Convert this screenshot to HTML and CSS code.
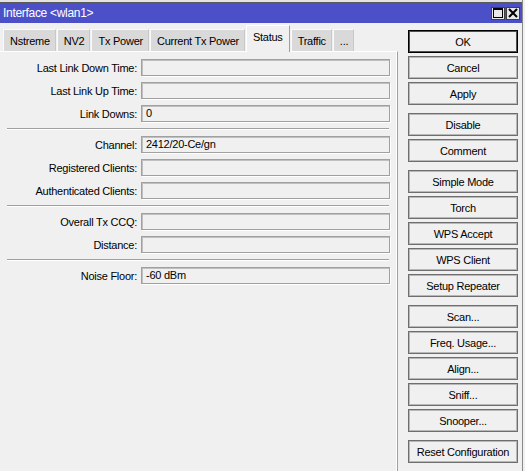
FILE: index.html
```html
<!DOCTYPE html>
<html>
<head>
<meta charset="utf-8">
<link rel="stylesheet" href="styles.css">
</head>
<body>
<div class="window">
  <div class="topstrip"></div>
  <div class="titlebar">
    <span class="title">Interface &lt;wlan1&gt;</span>
    <div class="winbtns">
      <span class="winbtn"><svg width="10" height="10" viewBox="0 0 10 10"><rect x="0.5" y="0.5" width="9" height="9" fill="none" stroke="#000" stroke-width="1"/><rect x="0" y="0" width="10" height="2" fill="#000"/></svg></span>
      <span class="winbtn"><svg width="10" height="10" viewBox="0 0 10 10"><path d="M1 1 L9 9 M9 1 L1 9" stroke="#000" stroke-width="2"/></svg></span>
    </div>
  </div>
  <div class="main">
    <div class="left">
      <div class="tabs">
        <span class="tab">Nstreme</span>
        <span class="tab">NV2</span>
        <span class="tab">Tx Power</span>
        <span class="tab">Current Tx Power</span>
        <span class="tab active">Status</span>
        <span class="tab">Traffic</span>
        <span class="tab">...</span>
      </div>
      <div class="panel">
        <div class="row"><span class="label">Last Link Down Time:</span><span class="field"></span></div>
        <div class="row"><span class="label">Last Link Up Time:</span><span class="field"></span></div>
        <div class="row"><span class="label">Link Downs:</span><span class="field">0</span></div>
        <div class="sep"></div>
        <div class="row"><span class="label">Channel:</span><span class="field">2412/20-Ce/gn</span></div>
        <div class="row"><span class="label">Registered Clients:</span><span class="field"></span></div>
        <div class="row"><span class="label">Authenticated Clients:</span><span class="field"></span></div>
        <div class="sep"></div>
        <div class="row"><span class="label">Overall Tx CCQ:</span><span class="field"></span></div>
        <div class="row"><span class="label">Distance:</span><span class="field"></span></div>
        <div class="sep"></div>
        <div class="row"><span class="label">Noise Floor:</span><span class="field">-60 dBm</span></div>
      </div>
    </div>
    <div class="right">
      <div class="group">
        <button class="btn default">OK</button>
        <button class="btn">Cancel</button>
        <button class="btn">Apply</button>
      </div>
      <div class="group">
        <button class="btn">Disable</button>
        <button class="btn">Comment</button>
      </div>
      <div class="group">
        <button class="btn">Simple Mode</button>
        <button class="btn">Torch</button>
        <button class="btn">WPS Accept</button>
        <button class="btn">WPS Client</button>
        <button class="btn">Setup Repeater</button>
      </div>
      <div class="group">
        <button class="btn">Scan...</button>
        <button class="btn">Freq. Usage...</button>
        <button class="btn">Align...</button>
        <button class="btn">Sniff...</button>
        <button class="btn">Snooper...</button>
      </div>
      <div class="group">
        <button class="btn">Reset Configuration</button>
      </div>
    </div>
  </div>
</div>
</body>
</html>
```
FILE: styles.css
```css
html, body {
  margin: 0;
  padding: 0;
  background: #f0f0f0;
}
body {
  font-family: "Liberation Sans", Arial, sans-serif;
  font-size: 11px;
  letter-spacing: -0.25px;
  color: #000;
}
.window {
  width: 522px;
  height: 471px;
  display: flex;
  flex-direction: column;
  overflow: hidden;
  border-right: 1px solid #8a8a8a;
}
.topstrip {
  height: 2px;
  border-bottom: 1px solid #5a5a5a;
  background: #e4e4e4;
}
.titlebar {
  height: 20px;
  background: #4c50c8;
  color: #fff;
  display: flex;
  align-items: center;
  justify-content: space-between;
  padding: 0 2px 0 3px;
}
.title {
  font-size: 12px;
  letter-spacing: -0.3px;
}
.winbtns {
  display: flex;
  gap: 1px;
}
.winbtn {
  width: 14px;
  height: 13px;
  background: #e8e8e8;
  border: 1px solid #404040;
  box-sizing: border-box;
  display: flex;
  align-items: center;
  justify-content: center;
}
.main {
  flex: 1;
  display: flex;
}
.left {
  width: 398px;
  display: flex;
  flex-direction: column;
}
.tabs {
  height: 28px;
  display: flex;
  align-items: flex-end;
  padding-left: 3px;
  gap: 1px;
}
.tab {
  height: 22px;
  box-sizing: border-box;
  background: #d9d9d9;
  border-top: 1px solid #fafafa;
  border-left: 1px solid #fafafa;
  border-right: 1px solid #c8c8c8;
  display: flex;
  align-items: center;
  padding: 0 5px 0 6px;
}
.tab.active {
  height: 27px;
  margin-bottom: -1px;
  background: #f0f0f0;
  border-top: 1px solid #ffffff;
  border-left: 1px solid #ffffff;
  border-right: 1px solid #a0a0a0;
  padding: 0 6px 5px 6px;
  position: relative;
  z-index: 1;
}
.panel {
  flex: 1;
  border-top: 1px solid #ffffff;
  border-right: 1px solid #a0a0a0;
  box-shadow: inset -1px 0 0 #ffffff;
  padding-top: 7px;
  display: flex;
  flex-direction: column;
  gap: 6px;
}
.row {
  display: flex;
  align-items: center;
  height: 17px;
}
.label {
  width: 141px;
  text-align: right;
  padding-right: 4px;
  box-sizing: border-box;
  white-space: nowrap;
}
.field {
  width: 249px;
  height: 17px;
  box-sizing: border-box;
  border: 1px solid #a0a0a0;
  box-shadow: inset 1px 1px 0 #c0c0c0, 1px 1px 0 #ffffff;
  padding: 0 0 0 4px;
  line-height: 15px;
  background: #f0f0f0;
}
.sep {
  height: 1px;
  margin: 0 8px 1px 7px;
  background: #a0a0a0;
  box-shadow: 0 1px 0 #ffffff;
}
.right {
  flex: 1;
  padding: 7px 0 0 10px;
  display: flex;
  flex-direction: column;
  gap: 8px;
}
.group {
  display: flex;
  flex-direction: column;
  gap: 3px;
}
.btn {
  width: 110px;
  height: 23px;
  margin: 0;
  padding: 0;
  font-family: inherit;
  font-size: 11px;
  letter-spacing: -0.25px;
  color: #000;
  background: #f0f0f0;
  border: 1px solid #6e6e6e;
  box-shadow: inset 0 0 0 1px #b8b8b8;
  border-radius: 0;
}
.btn.default {
  border: 1px solid #000;
  box-shadow: inset 0 0 0 1px #505050;
}
```
